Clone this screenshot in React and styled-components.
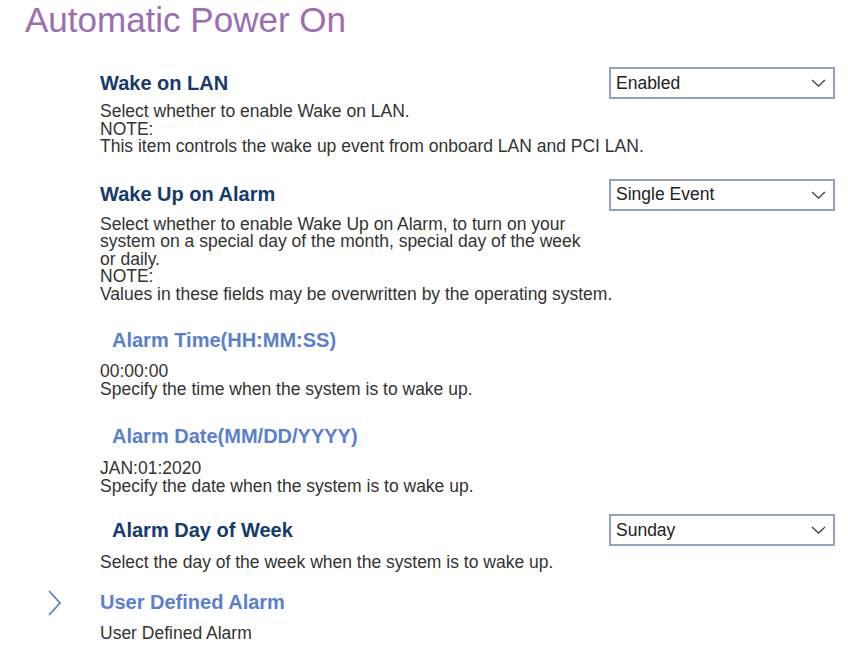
import React from "react";
import styled, { createGlobalStyle } from "styled-components";

const Global = createGlobalStyle`
  html, body { margin: 0; padding: 0; background: #ffffff; }
  body { font-family: "Liberation Sans", Arial, sans-serif; }
`;

const Page = styled.div`
  width: 848px;
  height: 656px;
  box-sizing: border-box;
  padding: 0 13px 0 25px;
  overflow: hidden;
`;

const Title = styled.h1`
  margin: 0;
  font-size: 35px;
  line-height: 40px;
  font-weight: 400;
  color: #9c6db4;
`;

const List = styled.div`
  display: flex;
  flex-direction: column;
  margin-left: 75px;
`;

const Setting = styled.div`
  margin-top: ${(p) => p.$gap}px;
`;

const Row = styled.div`
  display: flex;
  align-items: center;
  justify-content: space-between;
  height: 32px;
`;

const Heading = styled.div`
  font-size: 20px;
  font-weight: 700;
  color: ${(p) => (p.$link ? "#5a7fd0" : "#153a6d")};
  padding-left: ${(p) => (p.$sub ? 12 : 0)}px;
`;

const Desc = styled.div`
  margin-top: ${(p) => p.$top ?? 5}px;
  font-size: 17.5px;
  line-height: 17.5px;
  color: #333333;
  white-space: pre-line;
`;

const SelectBox = styled.div`
  width: 226px;
  height: 32px;
  box-sizing: border-box;
  border: 2px solid #93a2c0;
  display: flex;
  align-items: center;
  justify-content: space-between;
  padding: 0 7px 0 5px;
  font-size: 17.5px;
  color: #222222;
  background: #ffffff;
`;

const LinkItem = styled.div`
  display: grid;
  grid-template-columns: 75px 1fr;
  margin-left: -75px;
`;

const ChevronCell = styled.div`
  display: flex;
  align-items: center;
  justify-content: flex-start;
  padding-left: 22px;
  height: 32px;
`;

const Caret = () => (
  <svg width="15" height="8" viewBox="0 0 15 8" fill="none">
    <path d="M1 1l6.5 6 6.5-6" stroke="#444" strokeWidth="1.3" />
  </svg>
);

const Chevron = () => (
  <svg width="16" height="28" viewBox="0 0 16 28" fill="none">
    <path d="M2 2l11 12L2 26" stroke="#5a7fd0" strokeWidth="1.8" />
  </svg>
);

const Select = ({ value }) => (
  <SelectBox>
    <span>{value}</span>
    <Caret />
  </SelectBox>
);

export default function App() {
  return (
    <Page>
      <Global />
      <Title>Automatic Power On</Title>
      <List>
        <Setting $gap={27}>
          <Row>
            <Heading>Wake on LAN</Heading>
            <Select value="Enabled" />
          </Row>
          <Desc $top={4}>
            {"Select whether to enable Wake on LAN.\nNOTE:\nThis item controls the wake up event from onboard LAN and PCI LAN."}
          </Desc>
        </Setting>
        <Setting $gap={23}>
          <Row>
            <Heading>Wake Up on Alarm</Heading>
            <Select value="Single Event" />
          </Row>
          <Desc $top={5}>
            {"Select whether to enable Wake Up on Alarm, to turn on your\nsystem on a special day of the month, special day of the week\nor daily.\nNOTE:\nValues in these fields may be overwritten by the operating system."}
          </Desc>
        </Setting>
        <Setting $gap={21}>
          <Row>
            <Heading $sub $link>Alarm Time(HH:MM:SS)</Heading>
          </Row>
          <Desc $top={7}>{"00:00:00\nSpecify the time when the system is to wake up."}</Desc>
        </Setting>
        <Setting $gap={22}>
          <Row>
            <Heading $sub $link>Alarm Date(MM/DD/YYYY)</Heading>
          </Row>
          <Desc $top={8}>{"JAN:01:2020\nSpecify the date when the system is to wake up."}</Desc>
        </Setting>
        <Setting $gap={19}>
          <Row>
            <Heading $sub>Alarm Day of Week</Heading>
            <Select value="Sunday" />
          </Row>
          <Desc $top={8}>Select the day of the week when the system is to wake up.</Desc>
        </Setting>
        <Setting $gap={15}>
          <LinkItem>
            <ChevronCell>
              <Chevron />
            </ChevronCell>
            <div>
              <Row>
                <Heading $link>User Defined Alarm</Heading>
              </Row>
              <Desc $top={6}>User Defined Alarm</Desc>
            </div>
          </LinkItem>
        </Setting>
      </List>
    </Page>
  );
}
